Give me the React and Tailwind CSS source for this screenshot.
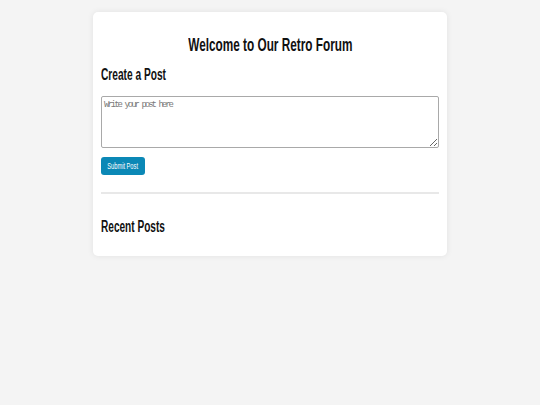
export default function App() {
    return (
        <div className="min-h-screen w-full bg-[#f4f4f4] pt-3 font-['Liberation_Sans',sans-serif]">
            {/* Forum card */}
            <div className="mx-auto w-[354px] rounded-[5px] bg-white px-2 pt-[21px] pb-[19px] shadow-[0_0_6px_rgba(0,0,0,0.08)]">
                <h1 className="h-6 text-center text-[18px] leading-6 font-bold text-[#111]">
                    <span className="inline-block scale-x-[0.655] whitespace-nowrap">Welcome to Our Retro Forum</span>
                </h1>

                <h2 className="mt-2 h-5 text-[16px] leading-5 font-bold text-[#111]">
                    <span className="inline-block origin-left scale-x-[0.635] whitespace-nowrap">Create a Post</span>
                </h2>

                <textarea
                    className="mt-[11px] block h-[52px] w-full rounded-[2px] border border-[#a9a9a9] px-[2px] py-[2px] font-['Liberation_Mono',monospace] text-[9px] leading-[12px] tracking-[-2px] text-[#333] placeholder:text-[#7a7a7a]"
                    placeholder="Write your post here"
                />

                <button className="mt-[9px] flex h-[18px] w-[44px] items-center justify-center rounded-[3px] bg-[#0b88b6] text-[9.5px] text-white">
                    <span className="inline-block scale-x-[0.6] whitespace-nowrap">Submit Post</span>
                </button>

                <div className="mt-[17px] h-[2px] w-full bg-[#e8e8e8]" />

                <h2 className="mt-[23px] h-5 text-[16px] leading-5 font-bold text-[#111]">
                    <span className="inline-block origin-left scale-x-[0.63] whitespace-nowrap">Recent Posts</span>
                </h2>
            </div>
        </div>
    )
}
